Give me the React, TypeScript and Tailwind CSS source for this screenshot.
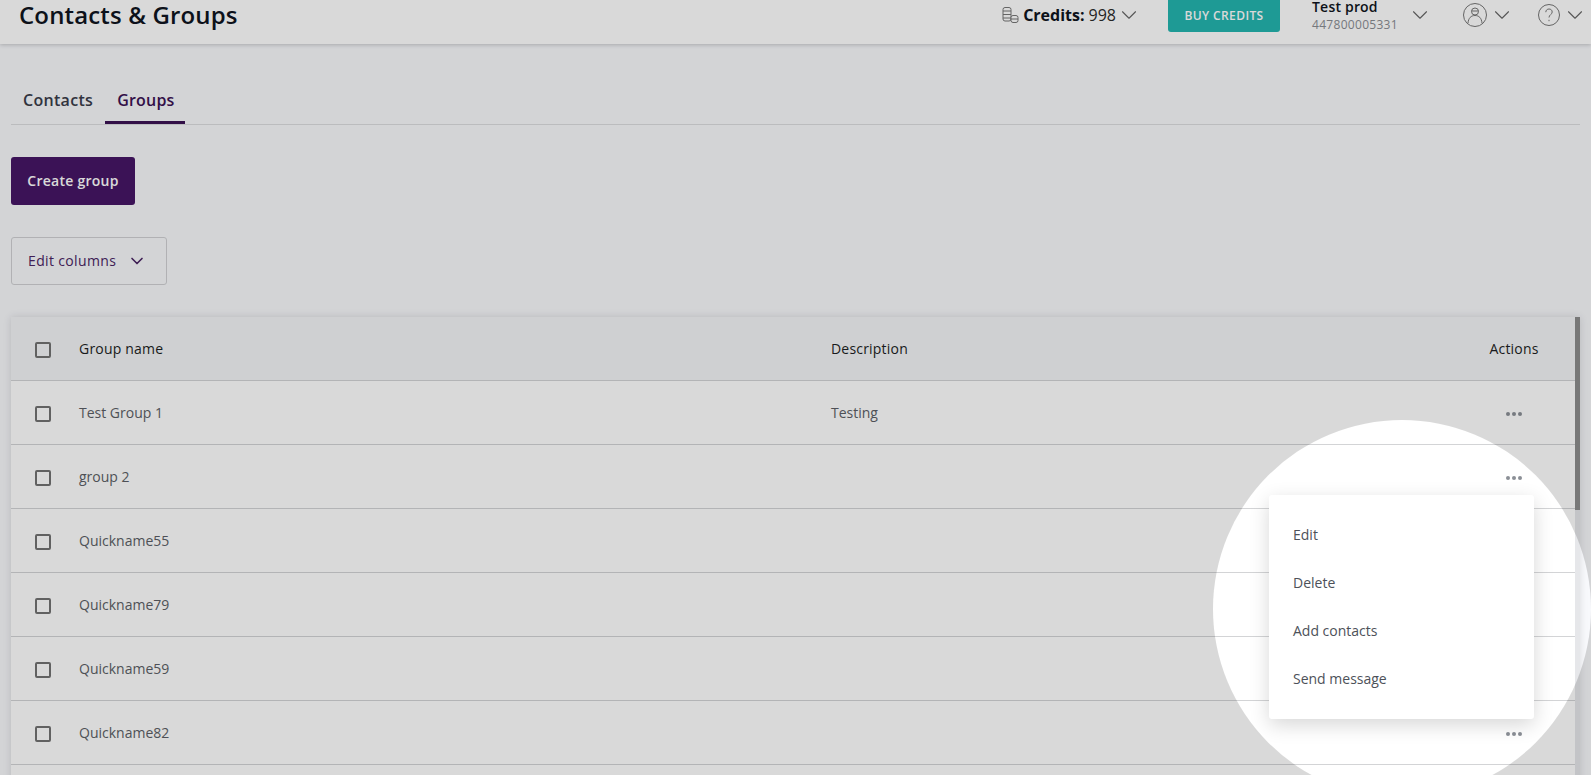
import { ChevronDown } from "lucide-react";

const groups = [
	{ name: "Test Group 1", description: "Testing" },
	{ name: "group 2", description: "" },
	{ name: "Quickname55", description: "" },
	{ name: "Quickname79", description: "" },
	{ name: "Quickname59", description: "" },
	{ name: "Quickname82", description: "" },
	{ name: "Quickname31", description: "" },
];

const menuItems = ["Edit", "Delete", "Add contacts", "Send message"];

function Checkbox() {
	return <span className="block mt-[2px] w-4 h-4 border-2 border-[#737373] rounded-[2px]" />;
}

function Dots() {
	return (
		<span className="flex gap-[2px]">
			<span className="w-1 h-1 rounded-full bg-[#8b8f96]" />
			<span className="w-1 h-1 rounded-full bg-[#8b8f96]" />
			<span className="w-1 h-1 rounded-full bg-[#8b8f96]" />
		</span>
	);
}

function Coins() {
	return (
		<svg width="17" height="18" viewBox="0 0 17 18" fill="none" stroke="#777" strokeWidth="1">
			<rect x="1" y="1.5" width="8" height="13.5" rx="2" />
			<path d="M1 5h8M1 8.5h8M1 12h8" />
			<rect x="9" y="9.5" width="7" height="7" rx="2" fill="#fff" />
			<path d="M9 13h7" />
		</svg>
	);
}

function Avatar() {
	return (
		<svg width="24" height="24" viewBox="0 0 24 24" fill="none" stroke="#777" strokeWidth="1">
			<circle cx="12" cy="12" r="11.5" />
			<circle cx="12" cy="8.500" r="3.500" />
			<path d="M8.500 8h7" />
			<path d="M5 20c0.5-5 3-7.500 7-7.500s6.500 2.500 7 7.500" />
		</svg>
	);
}

function Help() {
	return (
		<svg width="22" height="22" viewBox="0 0 22 22" fill="none" stroke="#777" strokeWidth="1">
			<circle cx="11" cy="11" r="10.500" />
			<path d="M7.800 8.200c0-2 1.400-3.200 3.200-3.200s3.200 1.200 3.200 3c0 2.600-3.200 2.600-3.200 5.500" />
			<path d="M11 15.800v1.400" />
		</svg>
	);
}

function Row({ name, description }: { name: string; description: string }) {
	return (
		<div className="flex items-center h-16 shrink-0 border-b border-[#d3d4d6] pl-6 text-sm text-[#5c5f66]">
			<Checkbox />
			<div className="ml-7 w-[752px]">{name}</div>
			<div className="flex-1">{description}</div>
			<div className="flex justify-center w-12 mr-[37px] pt-[3px]">
				<Dots />
			</div>
		</div>
	);
}

function App() {
	return (
		<div
			className="relative h-screen overflow-hidden bg-[#f8f9fc]"
			style={{ fontFamily: '"Open Sans", sans-serif' }}
		>
			<header className="flex items-center h-11 bg-white shadow-[0_1px_4px_rgba(0,0,0,0.2)] pl-[19px]">
				<h1 className="flex-1 text-2xl font-semibold tracking-[0.15px] text-[#0f1420] pb-[14px]">
					Contacts &amp; Groups
				</h1>
				<div className="flex items-center pb-[14px]">
					<Coins />
					<span className="ml-1 font-bold text-[#0f1420]">Credits:</span>
					<span className="ml-1 text-[#2b2b2b]">998</span>
					<ChevronDown className="text-[#666]" size={26} strokeWidth={1} />
				</div>
				<div className="flex items-center justify-center ml-[26px] w-28 h-8 mb-3 rounded-b-[3px] bg-[#24b5b0] text-xs font-semibold tracking-[0.4px] text-white">
					BUY CREDITS
				</div>
				<div className="ml-8 w-[95px] mb-3 leading-none">
					<div className="text-sm font-semibold tracking-[0.2px] text-[#0f1420] leading-[14px]">Test prod</div>
					<div className="mt-[3px] text-xs tracking-[0.3px] text-[#8a8d93] leading-4 whitespace-nowrap">
						447800005331
					</div>
				</div>
				<ChevronDown className="mb-[14px] text-[#666]" size={26} strokeWidth={1} />
				<div className="flex items-center ml-[30px] pb-[14px]">
					<Avatar />
					<ChevronDown className="ml-[2px] text-[#666]" size={26} strokeWidth={1} />
				</div>
				<div className="flex items-center ml-[23px] mr-[3px] pb-[14px]">
					<Help />
					<ChevronDown className="ml-[2px] text-[#666]" size={26} strokeWidth={1} />
				</div>
			</header>

			<main className="px-[11px]">
				<div className="flex mt-8 border-b border-[#dcdde0] w-[1569px]">
					<div className="px-3 pt-3 h-12 text-base font-semibold tracking-[0.3px] text-[#3a3d4a]">Contacts</div>
					<div className="pl-3 pr-[10px] pt-3 h-12 text-base font-semibold tracking-[0.2px] text-[#3b1254] border-b-[3px] border-[#3b1254] -mb-px">
						Groups
					</div>
				</div>

				<button className="block mt-8 w-[124px] h-12 rounded-[3px] bg-[#461666] text-sm font-semibold tracking-[0.25px] text-white">
					Create group
				</button>

				<button className="flex items-center mt-8 pl-4 w-[156px] h-12 rounded-[3px] border border-[#d0d1d4] text-sm font-medium tracking-[0.35px] text-[#4a2564]">
					Edit columns
					<ChevronDown className="ml-[11px]" size={20} strokeWidth={2} />
				</button>

				<div className="relative flex flex-col mt-8 w-[1569px] h-[600px] bg-white shadow-[0_0_8px_rgba(0,0,0,0.12)]">
					<div className="flex items-center h-16 shrink-0 border-b border-[#d3d4d6] pl-6 mr-[5px] bg-[#f4f5f7] text-sm font-medium tracking-[0.2px] text-[#1d1f24]">
						<Checkbox />
						<div className="ml-7 w-[752px]">Group name</div>
						<div className="flex-1">Description</div>
						<div className="flex justify-center w-12 mr-[37px]">Actions</div>
					</div>
					<div className="flex flex-col mr-[5px]">
						{groups.map((group, idx) => {
							return <Row key={idx} name={group.name} description={group.description} />;
						})}
					</div>
					<div className="absolute top-0 right-0 w-[5px] h-full bg-[#e6e7ea]">
						<div className="w-[5px] h-[193px] bg-[#8d8d8d]" />
					</div>
				</div>
			</main>

			<div className="absolute left-[1213px] top-[420px] w-[378px] h-[378px] rounded-full shadow-[0_0_0_3000px_rgba(0,0,0,0.15)]" />

			<div className="absolute left-[1269px] top-[495px] w-[265px] py-4 rounded-[3px] bg-white shadow-[0_6px_20px_rgba(0,0,0,0.16)] text-sm text-[#4d5159]">
				{menuItems.map((item) => {
					return (
						<div key={item} className="flex items-center h-12 px-6">
							{item}
						</div>
					);
				})}
			</div>
		</div>
	);
}

export default App;
